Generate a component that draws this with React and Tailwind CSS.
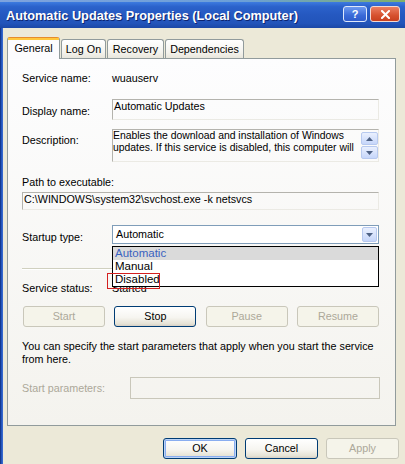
import React from 'react';

const btn =
  'h-[21px] rounded-[3px] border border-[#003c74] bg-[linear-gradient(180deg,#ffffff_0%,#f6f5f0_55%,#e6e3d6_88%,#d6d0c5_100%)] text-black flex items-center justify-center';
const btnOff =
  'h-[21px] rounded-[3px] border border-[#c9c7ba] bg-[#f5f4ea] text-[#aca899] flex items-center justify-center';
const readBox = 'border border-[#b4b3ad] border-r-[#ebeae4] border-b-[#ebeae4]';

function Arrow({ up }) {
  return (
    <svg width="7" height="4" viewBox="0 0 7 4">
      <path d={up ? 'M0 4 L3.5 0 L7 4 Z' : 'M0 0 L7 0 L3.5 4 Z'} fill="#4d6185" />
    </svg>
  );
}

function ScrollBtn({ up, className = '' }) {
  return (
    <div
      className={`flex items-center justify-center rounded-[2px] border border-[#b7c9ef] bg-[linear-gradient(180deg,#eaf0fe,#c6d6fa)] ${className}`}
    >
      <Arrow up={up} />
    </div>
  );
}

function Tab({ label, selected, w }) {
  if (selected) {
    return (
      <div
        className={`${w} h-[22px] -mb-[1px] relative z-10 rounded-t-[3px] border border-b-0 border-[#919b9c] border-t-[#e68b2c] bg-[#fcfcfe] flex flex-col`}
      >
        <div className="h-[2px] bg-[#ffc73c]" />
        <div className="flex-1 flex items-center justify-center pb-[3px]">{label}</div>
      </div>
    );
  }
  return (
    <div
      className={`${w} h-[19px] pt-[1px] rounded-t-[3px] border border-b-0 border-[#919b9c] bg-[linear-gradient(180deg,#ffffff,#f3f2ec_70%,#e8e6dc)] flex items-center justify-center`}
    >
      {label}
    </div>
  );
}

export default function App() {
  return (
    <div className="w-[405px] h-[464px] bg-[#ece9d8] relative overflow-hidden flex flex-col font-['Liberation_Sans',Arial,sans-serif] text-[10.75px] leading-[13px] text-black">
      {/* desktop strip above the window */}
      <div className="h-[2px] bg-[linear-gradient(90deg,#7ea3de,#6b9fd8_60%,#7fb06a)]" />

      {/* Title bar */}
      <div className="h-[26px] flex items-center pl-[6px] pr-[5px] bg-[linear-gradient(180deg,#3d7be0_0%,#2b62cb_18%,#2558c0_50%,#2254ba_82%,#1b48a6_100%)]">
        <span className="text-white font-bold text-[12.75px] [text-shadow:1px_1px_#0c2470] whitespace-nowrap">
          Automatic Updates Properties (Local Computer)
        </span>
        <div className="ml-auto flex items-center gap-[3px] mt-[-2px]">
          <div className="w-[24px] h-[16px] rounded-[3px] border border-[#dfe8fb] bg-[linear-gradient(180deg,#6d9af0,#3a6ad8_60%,#2f5ccc)] flex items-center justify-center text-white font-bold text-[11px]">
            ?
          </div>
          <div className="w-[30px] h-[16px] rounded-[3px] border border-[#f3d9d2] bg-[linear-gradient(180deg,#eb7f63,#d6512f_60%,#c8401f)] flex items-center justify-center">
            <svg width="9" height="9" viewBox="0 0 9 9">
              <path d="M1 1 L8 8 M8 1 L1 8" stroke="#fff" strokeWidth="2" strokeLinecap="square" />
            </svg>
          </div>
        </div>
      </div>

      <div className="flex-1 flex">
        {/* left window frame */}
        <div className="w-[3px] bg-[linear-gradient(90deg,#0d2a78,#2456bd,#3f70d4)]" />

        <div className="flex-1 pl-[4px] pr-[9px]">
          {/* Tabs */}
          <div className="mt-[9px] h-[21px] flex items-end gap-[1px]">
            <Tab label="General" selected w="w-[53px]" />
            <Tab label="Log On" w="w-[45px]" />
            <Tab label="Recovery" w="w-[57px]" />
            <Tab label="Dependencies" w="w-[79px]" />
          </div>

          {/* Tab panel */}
          <div className="border border-[#919b9c] bg-[linear-gradient(180deg,#fdfdfe,#f4f3ee)] pl-[14px] pr-[16px] pb-[26px]">
            <div className="mt-[13px] flex">
              <div className="w-[90px]">Service name:</div>
              <div>wuauserv</div>
            </div>

            <div className="mt-[14px] flex items-start">
              <div className="w-[90px] mt-[6px]">Display name:</div>
              <div className={`flex-1 h-[21px] pl-[1px] ${readBox}`}>Automatic Updates</div>
            </div>

            <div className="mt-[9px] flex items-start">
              <div className="w-[90px] mt-[5px]">Description:</div>
              <div className={`flex-1 h-[33px] flex ${readBox}`}>
                <div className="flex-1 text-[10.4px] leading-[12px] whitespace-nowrap overflow-hidden">
                  <div>Enables the download and installation of Windows</div>
                  <div>updates. If this service is disabled, this computer will</div>
                </div>
                <div className="w-[17px] pt-[2px] flex flex-col gap-[1px]">
                  <ScrollBtn up className="h-[13px]" />
                  <ScrollBtn className="h-[13px]" />
                </div>
              </div>
            </div>

            <div className="mt-[14px]">Path to executable:</div>
            <div className={`mt-[3px] h-[18px] pl-[1px] whitespace-nowrap ${readBox}`}>
              C:\WINDOWS\system32\svchost.exe -k netsvcs
            </div>

            <div className="mt-[15px] flex items-start">
              <div className="w-[90px] mt-[6px]">Startup type:</div>
              <div className="flex-1 h-[19px] border border-[#7f9db9] bg-white flex items-center pl-[3px] pr-[1px]">
                <span>Automatic</span>
                <ScrollBtn className="ml-auto w-[15px] h-[15px]" />
              </div>
            </div>

            <div className="mt-[24px] h-[2px] border-t border-[#d0d0bf] border-b border-b-white" />

            <div className="mt-[12px] flex">
              <div className="w-[90px]">Service status:</div>
              <div>Started</div>
            </div>

            <div className="mt-[11px] flex justify-between pl-[1px]">
              <div className={`${btnOff} w-[82px]`}>Start</div>
              <div className={`${btn} w-[82px]`}>Stop</div>
              <div className={`${btnOff} w-[82px]`}>Pause</div>
              <div className={`${btnOff} w-[82px]`}>Resume</div>
            </div>

            <div className="mt-[13px]">
              You can specify the start parameters that apply when you start the service
              <br />
              from here.
            </div>

            <div className="mt-[11px] flex items-center">
              <div className="w-[108px] text-[#aca899]">Start parameters:</div>
              <div className="flex-1 h-[22px] border border-[#c9c7ba] mr-[-1px]" />
            </div>
          </div>

          {/* Dialog buttons */}
          <div className="mt-[12px] flex justify-end gap-[8px] mr-[-3px]">
            <div className={`${btn} w-[74px] shadow-[inset_0_0_0_1px_#bcd4f6,inset_0_0_0_2px_#89adf0]`}>OK</div>
            <div className={`${btn} w-[73px]`}>Cancel</div>
            <div className={`${btnOff} w-[73px]`}>Apply</div>
          </div>
        </div>
      </div>

      {/* Opened startup-type list, lying over the status row */}
      <div className="absolute left-[112px] top-[246px] w-[267px] border border-black bg-white text-[11.5px]">
        <div className="h-[13px] pl-[2px] bg-[#dadada] text-[#3a62c0]">Automatic</div>
        <div className="h-[13px] pl-[2px]">Manual</div>
        <div className="h-[13px] pl-[2px]">Disabled</div>
      </div>
      <div className="absolute left-[107px] top-[273px] w-[53px] h-[16px] border border-[#d42020]" />
    </div>
  );
}
